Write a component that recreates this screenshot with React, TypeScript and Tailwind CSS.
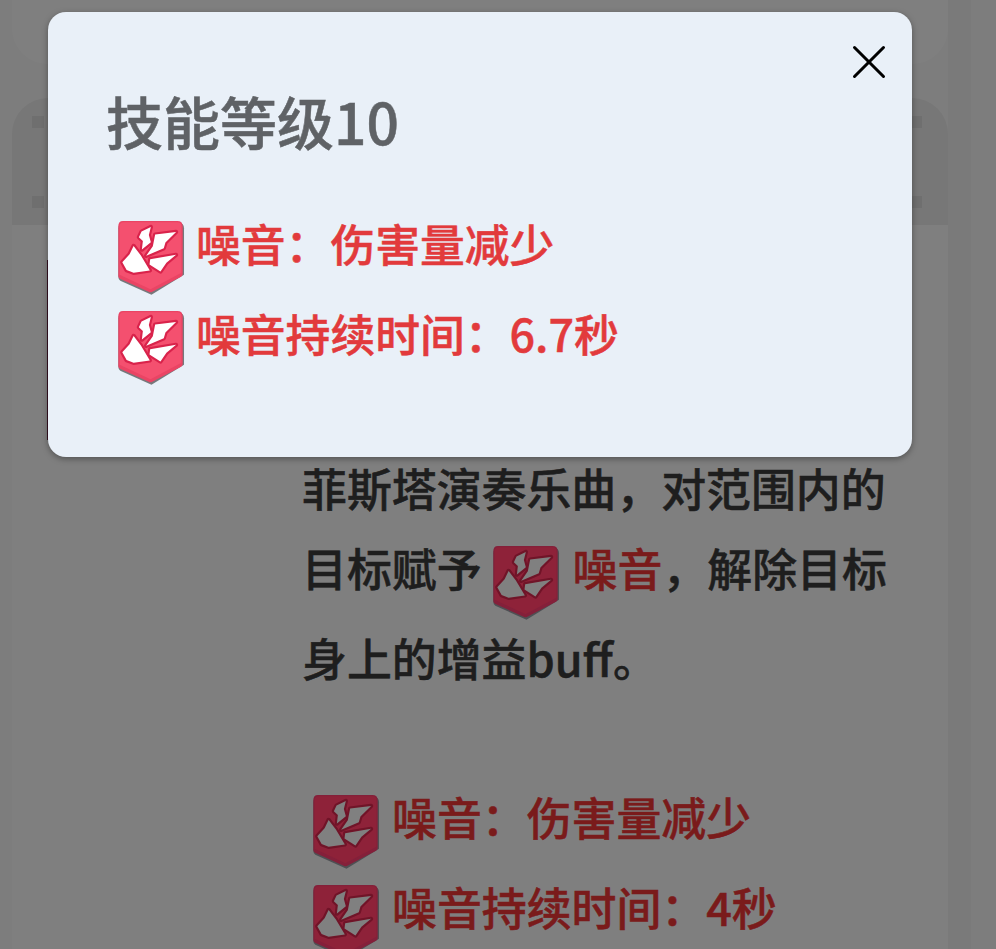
import { X } from "lucide-react";

const font = { fontFamily: '"Noto Sans CJK SC", "Noto Sans", sans-serif' };

const bright = {
  shadow: "#77787c",
  edge: "#ea4464",
  face: "#f4506f",
  line: "#d9234b",
  shard: "#ffffff",
};
// the badge in the page stays more saturated than the dimming layer would leave it
const dimmed = {
  shadow: "#4f5054",
  edge: "#84203a",
  face: "#8e2239",
  line: "#701428",
  shard: "#808080",
};

// Noise debuff badge, drawn over the shield from the game's icon set
function NoiseIcon({
  className = "",
  dim = false,
}: {
  className?: string;
  dim?: boolean;
}) {
  const c = dim ? dimmed : bright;
  return (
    <svg
      viewBox="54 32 206 226"
      className={`relative z-10 inline-block h-[75px] w-[69px] align-[-34px] ${className}`}
    >
      <path
        d="M72 38H236Q252 38 252 54V194L154 254L60 212Q54 208 54 200V54Q54 38 72 38Z"
        fill={c.shadow}
      />
      <path
        d="M68 32H232Q248 32 248 48V192Q248 197 243 200L155 246Q151 248 147 246L59 206Q54 203 54 198V48Q54 32 68 32Z"
        fill={c.edge}
      />
      <path
        d="M70 36H232Q244 36 244 48V188L151 238L58 194V48Q58 36 70 36Z"
        fill={c.face}
      />
      <g
        fill={c.shard}
        stroke={c.line}
        strokeWidth="13"
        strokeLinejoin="round"
        paintOrder="stroke"
      >
        <path d="M124 64L152 50L146 74L152 96L125 118L128 92L116 81Z" />
        <path d="M165 73L228 65L196 97L191 114L138 137L158 108Z" />
        <path d="M100 107L122 136L149 181L100 188L79 180L66 156L88 132Z" />
        <path d="M150 147L228 134L199 158L181 184L148 163Z" />
      </g>
    </svg>
  );
}

function EffectRow({
  text,
  gap = "mr-[10px]",
  dim = false,
}: {
  text: string;
  gap?: string;
  dim?: boolean;
}) {
  return (
    <div
      className={`h-[90px] whitespace-nowrap ${dim ? "text-[#f53636]" : "text-[#e23a3c]"}`}
    >
      <NoiseIcon className={gap} dim={dim} />
      {text}
    </div>
  );
}

function HeaderMarks() {
  return (
    <div className="flex flex-col gap-[68px]">
      <div className="h-3 w-3 bg-[#dfdfdf]" />
      <div className="h-3 w-3 bg-[#dfdfdf]" />
    </div>
  );
}

export default function App() {
  return (
    <div
      className="relative h-[949px] w-[996px] overflow-hidden bg-[#fbfbfb] font-medium [-webkit-text-stroke:0.5px]"
      style={font}
    >
      {/* Page behind the dialog */}
      <div className="flex h-full pl-3">
        <div className="flex w-[936px] flex-col">
          <div className="h-16 shrink-0 rounded-b-[36px] bg-white" />
          <div className="mt-[34px] flex h-[127px] shrink-0 justify-between rounded-t-[36px] bg-[#eeeeee] pr-[26px] pl-5 pt-[18px]">
            <HeaderMarks />
            <HeaderMarks />
          </div>
          <div className="flex grow bg-white">
            <div className="w-[290px] shrink-0 pl-[35px] pt-[35px]">
              <div className="h-[180px] w-[230px] bg-[#6b2140]" />
            </div>
            <div className="pt-[223px] text-[44.9px] leading-[80px] text-[#3c3c3c]">
              <p className="w-[600px]">菲斯塔演奏乐曲，对范围内的</p>
              <p className="h-[80px] whitespace-nowrap">
                目标赋予
                <NoiseIcon className="mx-[11px]" dim />
                <span className="text-[#f53636]">噪音</span>，解除目标
              </p>
              <p className="mt-[10px]">身上的增益buff。</p>
              <div className="mt-[79px] pl-[11px]">
                <EffectRow text="噪音：伤害量减少" dim />
                <EffectRow text="噪音持续时间：4秒" dim />
              </div>
            </div>
          </div>
        </div>
        <div className="h-full w-[23px] bg-[#f4f4f4]" />
      </div>

      <div className="absolute inset-0 bg-black/50" />

      {/* Skill level dialog */}
      <div className="absolute top-3 left-12 z-20 h-[445px] w-[864px] rounded-[18px] bg-[#e9f0f8] pl-[58px] pt-[70px] shadow-[0_2px_6px_rgba(0,0,0,0.35)]">
        <X
          className="absolute top-[21px] right-[14px] h-[58px] w-[58px] text-black"
          strokeWidth={1.25}
        />
        <h2 className="text-[57px] leading-[76px] text-[#5f6266]">技能等级10</h2>
        <div className="mt-[48px] pl-[12px] text-[44.8px] leading-[74px]">
          <EffectRow text="噪音：伤害量减少" gap="mr-[9px]" />
          <EffectRow text="噪音持续时间：6.7秒" gap="mr-[9px]" />
        </div>
      </div>
    </div>
  );
}
